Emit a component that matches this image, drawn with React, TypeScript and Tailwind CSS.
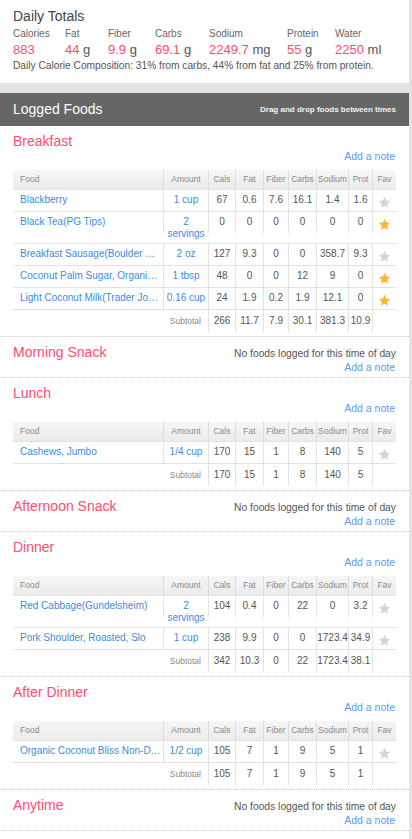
import React from 'react';

type Food = {
  name: string;
  amount: string;
  values: string[];
  fav: boolean;
};

type Meal = {
  name: string;
  foods: Food[] | null;
  subtotal?: string[];
};

const meals: Meal[] = [
  {
    name: 'Breakfast',
    foods: [
      { name: 'Blackberry', amount: '1 cup', values: ['67', '0.6', '7.6', '16.1', '1.4', '1.6'], fav: false },
      { name: 'Black Tea(PG Tips)', amount: '2 servings', values: ['0', '0', '0', '0', '0', '0'], fav: true },
      { name: 'Breakfast Sausage(Boulder S…', amount: '2 oz', values: ['127', '9.3', '0', '0', '358.7', '9.3'], fav: false },
      { name: 'Coconut Palm Sugar, Organi…', amount: '1 tbsp', values: ['48', '0', '0', '12', '9', '0'], fav: true },
      { name: 'Light Coconut Milk(Trader Jo…', amount: '0.16 cup', values: ['24', '1.9', '0.2', '1.9', '12.1', '0'], fav: true },
    ],
    subtotal: ['266', '11.7', '7.9', '30.1', '381.3', '10.9'],
  },
  { name: 'Morning Snack', foods: null },
  {
    name: 'Lunch',
    foods: [{ name: 'Cashews, Jumbo', amount: '1/4 cup', values: ['170', '15', '1', '8', '140', '5'], fav: false }],
    subtotal: ['170', '15', '1', '8', '140', '5'],
  },
  { name: 'Afternoon Snack', foods: null },
  {
    name: 'Dinner',
    foods: [
      { name: 'Red Cabbage(Gundelsheim)', amount: '2 servings', values: ['104', '0.4', '0', '22', '0', '3.2'], fav: false },
      { name: 'Pork Shoulder, Roasted, Slo', amount: '1 cup', values: ['238', '9.9', '0', '0', '1723.4', '34.9'], fav: false },
    ],
    subtotal: ['342', '10.3', '0', '22', '1723.4', '38.1'],
  },
  {
    name: 'After Dinner',
    foods: [{ name: 'Organic Coconut Bliss Non-D…', amount: '1/2 cup', values: ['105', '7', '1', '9', '5', '1'], fav: false }],
    subtotal: ['105', '7', '1', '9', '5', '1'],
  },
  { name: 'Anytime', foods: null },
];

const totals = [
  { label: 'Calories', value: '883', unit: '', w: 'w-[52px]' },
  { label: 'Fat', value: '44', unit: 'g', w: 'w-[43px]' },
  { label: 'Fiber', value: '9.9', unit: 'g', w: 'w-[47px]' },
  { label: 'Carbs', value: '69.1', unit: 'g', w: 'w-[54px]' },
  { label: 'Sodium', value: '2249.7', unit: 'mg', w: 'w-[78px]' },
  { label: 'Protein', value: '55', unit: 'g', w: 'w-[48px]' },
  { label: 'Water', value: '2250', unit: 'ml', w: 'w-[60px]' },
];

// numeric column widths: Cals, Fat, Fiber, Carbs, Sodium, Prot
const numCols = ['w-[27px]', 'w-[28px]', 'w-[25px]', 'w-[28px]', 'w-[32px]', 'w-[24px]'];
const numHeads = ['Cals', 'Fat', 'Fiber', 'Carbs', 'Sodium', 'Prot'];

const Star = ({ on }: { on: boolean }) => (
  <svg width="13" height="13" viewBox="0 0 24 24">
    <polygon
      points="12,1.5 15.1,8.3 22.5,9.1 17,14.1 18.5,21.5 12,17.8 5.5,21.5 7,14.1 1.5,9.1 8.9,8.3"
      fill={on ? '#fbb829' : '#d4d4d4'}
    />
  </svg>
);

const FoodTable = ({ foods, subtotal }: { foods: Food[]; subtotal: string[] }) => (
  <div className="mx-[13px] text-[10px] text-[#555]">
    <div className="flex h-[20px] items-center bg-gradient-to-b from-[#f6f6f6] to-[#ebebeb] border-b border-[#e2e2e2] text-[8.5px] text-[#8a8a8a]">
      <div className="w-[151px] h-full flex items-center pl-[7px] border-r border-[#dcdcdc]">Food</div>
      <div className="w-[45px] h-full flex items-center justify-center border-r border-[#dcdcdc]">Amount</div>
      {numHeads.map((h, i) => (
        <div key={h} className={`${numCols[i]} h-full flex items-center justify-center border-r border-[#dcdcdc]`}>
          {h}
        </div>
      ))}
      <div className="flex-1 h-full flex items-center justify-center">Fav</div>
    </div>
    {foods.map((f) => {
      const tall = f.amount.length > 8;
      return (
        <div key={f.name} className={`flex border-b border-[#e2e2e2] ${tall ? 'pb-[10px]' : ''}`}>
          <div className="w-[151px] h-[21px] pl-[7px] pr-[2px] pt-[4px] leading-[12px] text-[#3d8be0] truncate border-r border-[#e2e2e2]">
            {f.name}
          </div>
          <div className="w-[45px] h-[21px] px-[2px] pt-[4px] leading-[12px] text-center text-[#3d8be0] border-r border-[#e2e2e2]">
            {f.amount}
          </div>
          {f.values.map((v, i) => (
            <div key={i} className={`${numCols[i]} h-[21px] pt-[4px] leading-[12px] text-center whitespace-nowrap border-r border-[#e2e2e2]`}>
              {v}
            </div>
          ))}
          <div className="flex-1 h-[21px] flex items-center justify-center pt-[3px]">
            <Star on={f.fav} />
          </div>
        </div>
      );
    })}
    <div className="flex">
      <div className="w-[196px] h-[22px] pr-[7px] pt-[5px] leading-[12px] text-right text-[8.5px] text-[#8a8a8a] border-r border-[#e2e2e2]">
        Subtotal
      </div>
      {subtotal.map((v, i) => (
        <div key={i} className={`${numCols[i]} h-[22px] pt-[5px] leading-[12px] text-center whitespace-nowrap border-r border-[#e2e2e2]`}>
          {v}
        </div>
      ))}
      <div className="flex-1" />
    </div>
  </div>
);

const MealSection = ({ meal }: { meal: Meal }) => (
  <div className="border-b border-dotted border-[#c8c8c8] pt-[7px] pb-[4px]">
    <div className="flex items-baseline justify-between px-[13px] h-[17px]">
      <h3 className="text-[14px] leading-[16px] text-[#ff4d6f]">{meal.name}</h3>
      {!meal.foods && <span className="text-[10.3px] text-[#555]">No foods logged for this time of day</span>}
    </div>
    <div className="px-[14px] text-right text-[10.5px] leading-[12px] text-[#5a9bf2]">Add a note</div>
    {meal.foods && meal.subtotal && (
      <div className="mt-[8px]">
        <FoodTable foods={meal.foods} subtotal={meal.subtotal} />
      </div>
    )}
  </div>
);

export default function App() {
  return (
    <div className="min-h-screen bg-[#e3e3e3] pr-[3px] font-['Liberation_Sans',Arial,sans-serif]">
      <div className="bg-white h-[83px] px-[13px] pt-[8px]">
        <h2 className="text-[14px] leading-[16px] text-[#444]">Daily Totals</h2>
        <div className="flex mt-[4px]">
          {totals.map((t) => (
            <div key={t.label} className={`${t.w} shrink-0`}>
              <div className="text-[10px] leading-[12px] text-[#666]">{t.label}</div>
              <div className="mt-[2px] text-[13px] leading-[15px] whitespace-nowrap">
                <span className="text-[#ff4d6f]">{t.value}</span>
                {t.unit && <span className="text-[#555]"> {t.unit}</span>}
              </div>
            </div>
          ))}
        </div>
        <p className="mt-[3px] text-[10.2px] leading-[12px] text-[#555] whitespace-nowrap">
          Daily Calorie Composition: 31% from carbs, 44% from fat and 25% from protein.
        </p>
      </div>
      <div className="mt-[10px] bg-white min-h-[746px]">
        <div className="flex h-[33px] items-center justify-between bg-[#666] px-[13px]">
          <span className="text-[14px] text-white">Logged Foods</span>
          <span className="text-[8px] font-bold text-[#f2f2f2]">Drag and drop foods between times</span>
        </div>
        {meals.map((m) => (
          <MealSection key={m.name} meal={m} />
        ))}
      </div>
    </div>
  );
}
